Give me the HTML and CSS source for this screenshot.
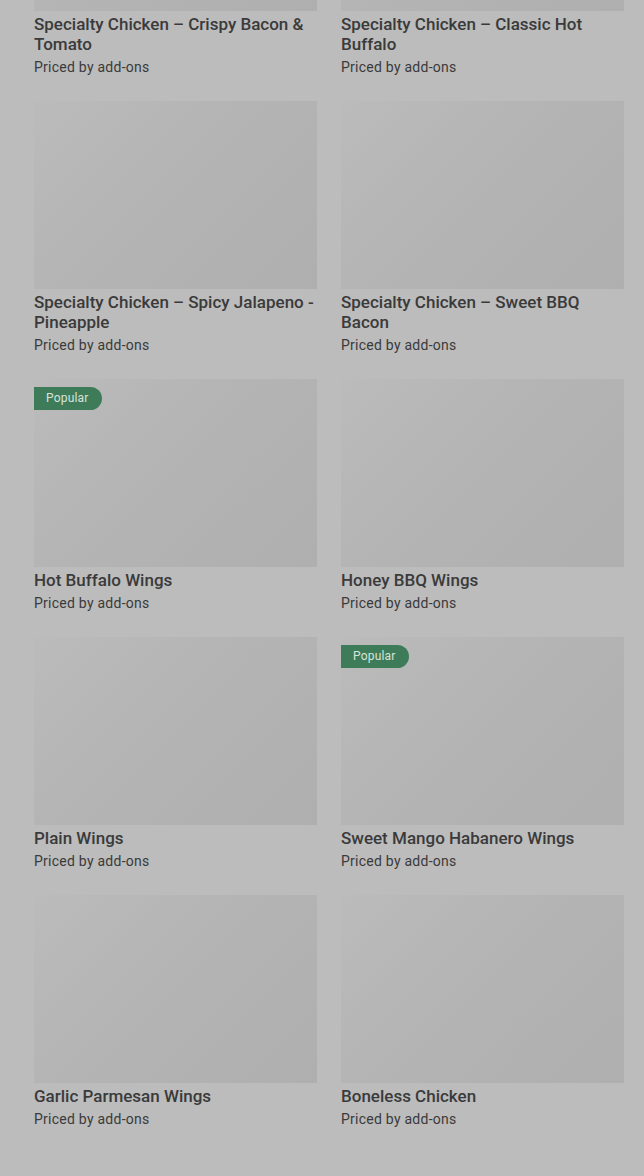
FILE: index.html
```html
<!DOCTYPE html>
<html lang="en">
<head>
    <meta charset="UTF-8">
    <meta name="viewport" content="width=device-width, initial-scale=1.0">
    <title>Menu - Wings</title>
    <link rel="stylesheet" href="styles.css">
</head>
<body>
    <div class="menu">
        <div class="item-grid">
            <div class="item">
                <div class="item-photo"></div>
                <div class="item-name">Specialty Chicken – Crispy Bacon &amp; Tomato</div>
                <div class="item-price">Priced by add-ons</div>
            </div>
            <div class="item">
                <div class="item-photo"></div>
                <div class="item-name">Specialty Chicken – Classic Hot Buffalo</div>
                <div class="item-price">Priced by add-ons</div>
            </div>
            <div class="item">
                <div class="item-photo"></div>
                <div class="item-name">Specialty Chicken – Spicy Jalapeno - Pineapple</div>
                <div class="item-price">Priced by add-ons</div>
            </div>
            <div class="item">
                <div class="item-photo"></div>
                <div class="item-name">Specialty Chicken – Sweet BBQ Bacon</div>
                <div class="item-price">Priced by add-ons</div>
            </div>
            <div class="item">
                <div class="item-photo">
                    <span class="badge">Popular</span>
                </div>
                <div class="item-name">Hot Buffalo Wings</div>
                <div class="item-price">Priced by add-ons</div>
            </div>
            <div class="item">
                <div class="item-photo"></div>
                <div class="item-name">Honey BBQ Wings</div>
                <div class="item-price">Priced by add-ons</div>
            </div>
            <div class="item">
                <div class="item-photo"></div>
                <div class="item-name">Plain Wings</div>
                <div class="item-price">Priced by add-ons</div>
            </div>
            <div class="item">
                <div class="item-photo">
                    <span class="badge">Popular</span>
                </div>
                <div class="item-name">Sweet Mango Habanero Wings</div>
                <div class="item-price">Priced by add-ons</div>
            </div>
            <div class="item">
                <div class="item-photo"></div>
                <div class="item-name">Garlic Parmesan Wings</div>
                <div class="item-price">Priced by add-ons</div>
            </div>
            <div class="item">
                <div class="item-photo"></div>
                <div class="item-name">Boneless Chicken</div>
                <div class="item-price">Priced by add-ons</div>
            </div>
        </div>
    </div>
</body>
</html>
```

FILE: styles.css
```css
body {
    margin: 0;
    font-family: Roboto, "Liberation Sans", sans-serif;
    background-color: #bcbcbc;
    color: #363636;
    overflow: hidden;
}
.menu {
    padding: 0 20px 0 34px;
    margin-top: -177px; /* list is scrolled down */
}
.item-grid {
    display: grid;
    grid-template-columns: 1fr 1fr;
    column-gap: 24px;
    row-gap: 24px;
}
.item-photo {
    position: relative;
    height: 188px;
    background: linear-gradient(135deg, #bbbbbb 0%, #b4b4b4 45%, #afafaf 100%);
}
.badge {
    position: absolute;
    top: 8px;
    left: 0;
    height: 23px;
    line-height: 23px;
    padding: 0 13px 0 12px;
    border-radius: 0 12px 12px 0;
    background-color: #3e7c59;
    color: #d8e2dc;
    font-size: 12px;
    letter-spacing: 0.2px;
}
.item-name {
    margin-top: 3px;
    font-size: 17px;
    font-weight: 500;
    line-height: 20px;
    color: #3a3a3a;
}
.item-price {
    margin-top: 3px;
    font-size: 14px;
    line-height: 20px;
    letter-spacing: 0.25px;
    color: #3a3a3a;
}
```
